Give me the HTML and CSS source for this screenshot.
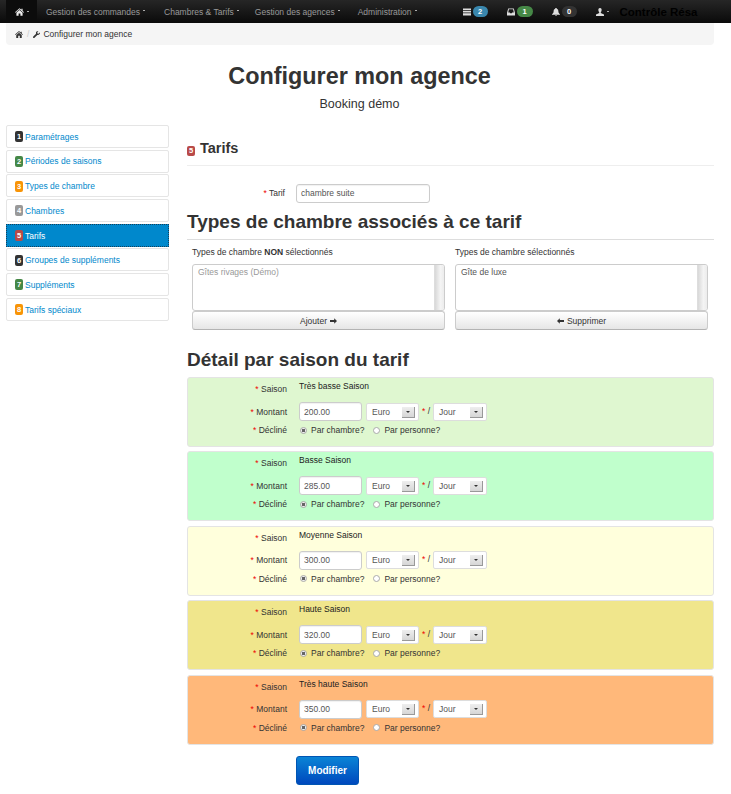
FILE: index.html
```html
<!DOCTYPE html>
<html lang="fr">
<head>
<meta charset="utf-8">
<title>Configurer mon agence</title>
<link rel="stylesheet" href="styles.css">
</head>
<body>
<svg class="defs" width="0" height="0" aria-hidden="true">
  <symbol id="i-home" viewBox="0 0 14 12"><path d="M7 0 L10 2.6 V1 H11.8 V4.2 L14 6.2 L13.2 7 L7 1.8 L.8 7 L0 6.2 Z M2.2 7 L7 3 L11.8 7 V12 H8.4 V8.4 H5.6 V12 H2.2 Z"/></symbol>
  <symbol id="i-wrench" viewBox="0 0 12 12"><path d="M11.5 2.6 L9.4 4.6 L7.6 4.3 L7.3 2.5 L9.3 .5 C7.5 -.2 5.5 .8 5.1 2.6 C5 3.3 5 3.9 5.3 4.6 L.5 9.4 C-.2 10.1 -.2 11 .4 11.6 C1 12.2 1.9 12.2 2.6 11.5 L7.4 6.7 C9.6 7.5 12 5.8 12 3.6 C12 3.2 11.8 2.9 11.5 2.6 Z"/></symbol>
  <symbol id="i-list" viewBox="0 0 10 9"><path d="M0 0 H10 V2 H0 Z M0 3 H10 V5 H0 Z M0 6 H10 V9 H0 Z"/></symbol>
  <symbol id="i-inbox" viewBox="0 0 10 9"><path fill-rule="evenodd" d="M1.5 0 H8.5 L10 5.5 V9 H0 V5.500 Z M2.400 1.200 L1.500 5 H3.500 L4 6 H6 L6.500 5 H8.500 L7.600 1.200 Z"/></symbol>
  <symbol id="i-bell" viewBox="0 0 10 10"><path d="M5 0 C6 0 6 .6 6 1 C7.600 1.500 8 3 8 4.500 C8 6.200 9 7 10 7.800 V8.500 H0 V7.800 C1 7 2 6.200 2 4.500 C2 3 2.400 1.500 4 1 C4 .6 4 0 5 0 Z M3.800 9 H6.200 C6.200 10.300 3.800 10.300 3.800 9 Z"/></symbol>
  <symbol id="i-user" viewBox="0 0 10 10"><path d="M5 0 C6.800 0 7.200 1.500 7 3 C6.900 4 6.500 4.800 6 5.300 V6.200 L10 8 V10 H0 V8 L4 6.200 V5.300 C3.500 4.800 3.100 4 3 3 C2.800 1.500 3.200 0 5 0 Z"/></symbol>
  <symbol id="i-right" viewBox="0 0 10 8"><path d="M6 0 L10 4 L6 8 V5.500 H0 V2.500 H6 Z"/></symbol>
  <symbol id="i-left" viewBox="0 0 10 8"><path d="M4 0 L0 4 L4 8 V5.500 H10 V2.500 H4 Z"/></symbol>
</svg>

<nav class="navbar">
  <a class="nav-home"><svg class="ico ico-home"><use href="#i-home"/></svg><i class="caret"></i></a>
  <a class="nav-link nav-first">Gestion des commandes<i class="caret"></i></a>
  <a class="nav-link nav-tight">Chambres &amp; Tarifs<i class="caret"></i></a>
  <a class="nav-link nav-mid">Gestion des agences<i class="caret"></i></a>
  <a class="nav-link">Administration<i class="caret"></i></a>
  <div class="nav-right">
    <span class="stat"><svg class="ico ico-s"><use href="#i-list"/></svg><b class="pill pill-blue">2</b></span>
    <span class="stat"><svg class="ico ico-s"><use href="#i-inbox"/></svg><b class="pill pill-green">1</b></span>
    <span class="stat"><svg class="ico ico-s"><use href="#i-bell"/></svg><b class="pill pill-dark">0</b></span>
    <span class="stat stat-user"><svg class="ico ico-s"><use href="#i-user"/></svg><i class="caret"></i></span>
    <span class="brand">Contrôle Résa</span>
  </div>
</nav>

<div class="breadcrumb">
  <svg class="crumb-ico"><use href="#i-home"/></svg>
  <span class="crumb-sep">/</span>
  <svg class="crumb-wrench"><use href="#i-wrench"/></svg>
  <span>Configurer mon agence</span>
</div>

<header class="page-head">
  <h1>Configurer mon agence</h1>
  <p>Booking démo</p>
</header>

<div class="layout">
  <ul class="sidenav">
    <li><a><b class="num n-dark">1</b>Paramétrages</a></li>
    <li><a><b class="num n-green">2</b>Périodes de saisons</a></li>
    <li><a><b class="num n-orange">3</b>Types de chambre</a></li>
    <li><a><b class="num n-gray">4</b>Chambres</a></li>
    <li class="active"><a><b class="num n-red">5</b>Tarifs</a></li>
    <li><a><b class="num n-dark">6</b>Groupes de suppléments</a></li>
    <li><a><b class="num n-green">7</b>Suppléments</a></li>
    <li><a><b class="num n-orange">8</b>Tarifs spéciaux</a></li>
  </ul>

  <main class="content">
    <div class="section-head">
      <b class="num num-title n-red">5</b><h2>Tarifs</h2>
    </div>
    <div class="tarif-row">
      <label class="lbl"><em>*</em> Tarif</label>
      <input class="field field-name" type="text" value="chambre suite">
    </div>
    <h3 class="h-rule">Types de chambre associés à ce tarif</h3>
    <div class="pickers">
      <div class="picker">
        <div class="picker-title">Types de chambre <b>NON</b> sélectionnés</div>
        <div class="listbox"><div class="list-items muted">Gîtes rivages (Démo)</div><div class="list-scroll"></div></div>
        <button class="btn-light" type="button">Ajouter <svg class="arrow"><use href="#i-right"/></svg></button>
      </div>
      <div class="picker">
        <div class="picker-title">Types de chambre sélectionnés</div>
        <div class="listbox"><div class="list-items">Gîte de luxe</div><div class="list-scroll"></div></div>
        <button class="btn-light" type="button"><svg class="arrow"><use href="#i-left"/></svg> Supprimer</button>
      </div>
    </div>
    <h3 class="h-detail">Détail par saison du tarif</h3>

    <section class="season s1">
      <div class="row row-saison"><label class="lbl"><em>*</em> Saison</label><span class="val">Très basse Saison</span></div>
      <div class="row row-montant"><label class="lbl"><em>*</em> Montant</label><input class="field field-amt" type="text" value="200.00"><span class="sel sel-euro">Euro<i class="sel-btn"></i></span><span class="slash"><em>*</em> /</span><span class="sel sel-jour">Jour<i class="sel-btn"></i></span></div>
      <div class="row row-decl"><label class="lbl"><em>*</em> Décliné</label><span class="radio on"></span><span class="opt">Par chambre?</span><span class="radio"></span><span class="opt">Par personne?</span></div>
    </section>
    <section class="season s2">
      <div class="row row-saison"><label class="lbl"><em>*</em> Saison</label><span class="val">Basse Saison</span></div>
      <div class="row row-montant"><label class="lbl"><em>*</em> Montant</label><input class="field field-amt" type="text" value="285.00"><span class="sel sel-euro">Euro<i class="sel-btn"></i></span><span class="slash"><em>*</em> /</span><span class="sel sel-jour">Jour<i class="sel-btn"></i></span></div>
      <div class="row row-decl"><label class="lbl"><em>*</em> Décliné</label><span class="radio on"></span><span class="opt">Par chambre?</span><span class="radio"></span><span class="opt">Par personne?</span></div>
    </section>
    <section class="season s3">
      <div class="row row-saison"><label class="lbl"><em>*</em> Saison</label><span class="val">Moyenne Saison</span></div>
      <div class="row row-montant"><label class="lbl"><em>*</em> Montant</label><input class="field field-amt" type="text" value="300.00"><span class="sel sel-euro">Euro<i class="sel-btn"></i></span><span class="slash"><em>*</em> /</span><span class="sel sel-jour">Jour<i class="sel-btn"></i></span></div>
      <div class="row row-decl"><label class="lbl"><em>*</em> Décliné</label><span class="radio on"></span><span class="opt">Par chambre?</span><span class="radio"></span><span class="opt">Par personne?</span></div>
    </section>
    <section class="season s4">
      <div class="row row-saison"><label class="lbl"><em>*</em> Saison</label><span class="val">Haute Saison</span></div>
      <div class="row row-montant"><label class="lbl"><em>*</em> Montant</label><input class="field field-amt" type="text" value="320.00"><span class="sel sel-euro">Euro<i class="sel-btn"></i></span><span class="slash"><em>*</em> /</span><span class="sel sel-jour">Jour<i class="sel-btn"></i></span></div>
      <div class="row row-decl"><label class="lbl"><em>*</em> Décliné</label><span class="radio on"></span><span class="opt">Par chambre?</span><span class="radio"></span><span class="opt">Par personne?</span></div>
    </section>
    <section class="season s5">
      <div class="row row-saison"><label class="lbl"><em>*</em> Saison</label><span class="val">Très haute Saison</span></div>
      <div class="row row-montant"><label class="lbl"><em>*</em> Montant</label><input class="field field-amt" type="text" value="350.00"><span class="sel sel-euro">Euro<i class="sel-btn"></i></span><span class="slash"><em>*</em> /</span><span class="sel sel-jour">Jour<i class="sel-btn"></i></span></div>
      <div class="row row-decl"><label class="lbl"><em>*</em> Décliné</label><span class="radio on"></span><span class="opt">Par chambre?</span><span class="radio"></span><span class="opt">Par personne?</span></div>
    </section>

    <div class="actions"><button class="btn-primary" type="button">Modifier</button></div>
  </main>
</div>
</body>
</html>
```

FILE: styles.css
```css
* { box-sizing: border-box; }
html, body { margin: 0; padding: 0; }
body {
  width: 731px;
  height: 794px;
  overflow: hidden;
  background: #fff;
  color: #333;
  font-family: "Liberation Sans", Arial, sans-serif;
  font-size: 8.500px;
  line-height: 12px;
}
.defs { position: absolute; }
em { font-style: normal; color: #e00; }

/* navbar */
.navbar {
  display: flex;
  align-items: center;
  height: 23px;
  background: linear-gradient(#262626, #0a0a0a);
  color: #999;
  padding-left: 6px;
}
.nav-home {
  display: flex;
  align-items: center;
  justify-content: center;
  width: 31px;
  height: 23px;
  background: #0c0c0c;
  padding-left: 1px;
}
.ico { fill: #ddd; display: block; }
.ico-home { width: 9px; height: 8px; fill: #eee; }
.ico-s { width: 8px; height: 8px; }
.caret {
  display: inline-block;
  width: 2px;
  height: 1px;
  background: #aaa;
  margin-left: 3px;
  vertical-align: 4px;
}
.nav-link { white-space: nowrap; margin-right: 19px; font-size: 8.500px; }
.nav-first { margin-left: 9px; }
.nav-tight { margin-right: 16px; }
.nav-mid { margin-right: 18px; }
.nav-right { display: flex; align-items: center; margin-left: 27px; }
.stat { display: flex; align-items: center; gap: 2px; margin-right: 19px; }
.stat-user { margin-right: 11px; gap: 0; }
.pill {
  display: block;
  min-width: 15px;
  height: 11px;
  line-height: 11px;
  border-radius: 6px;
  font-size: 7.500px;
  color: #fff;
  text-align: center;
}
.pill-blue { background: #3a87ad; }
.pill-green { background: #468847; width: 16px; }
.pill-dark { background: #333; }
.brand { font-size: 11.500px; font-weight: bold; color: #000; white-space: nowrap; }

/* breadcrumb */
.breadcrumb {
  display: flex;
  align-items: center;
  height: 22px;
  margin: 0 17px 0 6px;
  padding-left: 9px;
  background: #f5f5f5;
  border-radius: 0 0 4px 4px;
  color: #333;
  font-size: 8.500px;
}
.crumb-ico { width: 8px; height: 7px; fill: #333; }
.crumb-sep { color: #ccc; margin: 0 4px; }
.crumb-wrench { width: 7px; height: 7px; fill: #333; margin-right: 3px; }

/* page head */
.page-head { text-align: center; padding-top: 15px; height: 80px; padding-right: 12px; }
.page-head h1 { margin: 0; font-size: 23.400px; line-height: 32px; font-weight: bold; color: #333; }
.page-head p { margin: 3px 0 0; font-size: 12.500px; line-height: 18px; color: #333; }

/* layout */
.layout { display: flex; align-items: flex-start; padding-left: 6px; }
.sidenav {
  width: 163px;
  list-style: none;
  margin: 0;
  padding: 0;
  display: flex;
  flex-direction: column;
  gap: 1.700px;
}
.sidenav li {
  height: 23px;
  border: 1px solid #e5e5e5;
  border-radius: 2px;
  background: #fff;
}
.sidenav a {
  display: flex;
  align-items: center;
  height: 100%;
  padding: .5px 0 0 8px;
  color: #0088cc;
  font-size: 8.500px;
}
.sidenav .active { background: #0088cc; border: 1px dotted #14405c; border-radius: 0; }
.sidenav .active a { color: #fff; }
.num {
  display: block;
  flex: none;
  width: 8px;
  height: 11px;
  line-height: 11px;
  margin-right: 2px;
  border-radius: 2px;
  color: #fff;
  font-size: 7.500px;
  text-align: center;
}
.n-dark { background: #333; }
.n-green { background: #468847; }
.n-orange { background: #f89406; }
.n-gray { background: #999; }
.n-red { background: #b94a48; }

.content { width: 527px; margin-left: 18px; }
.section-head {
  display: flex;
  align-items: flex-end;
  height: 41px;
  padding-bottom: 8px;
  border-bottom: 1px solid #eee;
}
.section-head h2 { margin: 0; font-size: 14.500px; line-height: 18px; font-weight: bold; color: #333; }
.num-title { width: 8px; height: 10px; line-height: 10px; margin: 0 5px 1px 0; }

.tarif-row { display: flex; align-items: center; margin-top: 17px; height: 20px; }
.lbl { display: block; width: 99px; flex: none; text-align: right; color: #333; white-space: nowrap; }
.tarif-row .lbl { width: 98px; }
.field {
  display: block;
  height: 19px;
  padding: 0 4px;
  border: 1px solid #ccc;
  border-radius: 3px;
  background: #fff;
  color: #555;
  font-family: inherit;
  font-size: 8.500px;
  box-shadow: inset 0 1px 1px rgba(0,0,0,.06);
  outline: none;
}
.field-name { width: 134px; margin-left: 11px; }

.h-rule {
  margin: 9px 0 0;
  height: 28px;
  border-bottom: 1px solid #ddd;
  font-size: 19px;
  line-height: 20px;
  font-weight: bold;
  color: #333;
  white-space: nowrap;
}
.pickers { display: flex; gap: 10px; padding-left: 5px; width: 521px; margin-top: 6px; }
.picker { width: 253px; }
.picker-title { height: 12px; line-height: 12px; color: #333; }
.listbox {
  display: flex;
  height: 47px;
  margin-top: 6px;
  border: 1px solid #ccc;
  border-radius: 3px;
  background: #fff;
  overflow: hidden;
}
.list-items { flex: 1; padding: 1px 5px; color: #555; }
.list-items.muted { color: #999; }
.list-scroll { width: 10px; background: linear-gradient(90deg, #d8d8d8, #f4f4f4 60%, #ececec); border-left: 1px solid #ddd; }
.btn-light {
  display: flex;
  align-items: center;
  justify-content: center;
  gap: 3px;
  width: 100%;
  height: 19px;
  padding: 0;
  border: 1px solid #ccc;
  border-bottom-color: #b3b3b3;
  border-radius: 3px;
  background: linear-gradient(#fff, #e6e6e6);
  color: #333;
  font-family: inherit;
  font-size: 8.500px;
}
.arrow { width: 7px; height: 6px; fill: #333; }

.h-detail {
  margin: 19px 0 6px;
  font-size: 19px;
  line-height: 22px;
  font-weight: bold;
  color: #333;
}

.season {
  height: 70px;
  margin-bottom: 4.400px;
  border: 1px solid #e4e4e4;
  border-radius: 3px;
}
.s1 { background: #dff7d0; }
.s2 { background: #c0ffcc; }
.s3 { background: #ffffdc; }
.s4 { background: #f0e68c; }
.s5 { background: #ffb87a; }
.row { display: flex; align-items: center; }
.row-saison { height: 20px; margin-top: 1px; }
.row-saison .val { margin-left: 12px; position: relative; top: -3px; color: #222; }
.row-montant { height: 19px; margin-top: 3px; }
.row-decl { height: 14px; margin-top: 2px; }
.field-amt { width: 63px; margin-left: 12px; }
.sel {
  display: flex;
  align-items: center;
  height: 18px;
  padding-left: 5px;
  margin-left: 4px;
  position: relative;
  background: #fff;
  border: 1px solid #ddd;
  border-radius: 2px;
  color: #555;
}
.sel-euro { width: 53px; }
.sel-jour { width: 54px; margin-left: 3px; }
.sel-btn {
  position: absolute;
  right: 3px;
  top: 3px;
  width: 13px;
  height: 11px;
  background: linear-gradient(#eee, #d6d6d6);
  border-right: 1px solid #999;
  border-bottom: 1px solid #999;
}
.sel-btn::after {
  content: "";
  position: absolute;
  left: 4px;
  top: 4px;
  border: 2px solid transparent;
  border-top: 2px solid #333;
}
.slash { margin-left: 3px; color: #333; position: relative; top: -1px; white-space: nowrap; }
.radio {
  display: block;
  flex: none;
  width: 7px;
  height: 7px;
  margin-left: 9px;
  border: 1px solid #aaa;
  border-radius: 50%;
  background: #fff;
}
.radio.on { margin-left: 13px; background: radial-gradient(circle, #666 0 1.500px, #eee 2px); }
.opt { margin-left: 4px; color: #333; white-space: nowrap; }

.actions { padding-left: 109px; margin-top: 11px; }
.btn-primary {
  display: block;
  width: 63px;
  height: 29px;
  padding: 0;
  border: 1px solid #0055b3;
  border-radius: 3px;
  background: linear-gradient(#0a84d6, #0048bd);
  color: #fff;
  font-family: inherit;
  font-size: 10px;
  font-weight: bold;
}
```
